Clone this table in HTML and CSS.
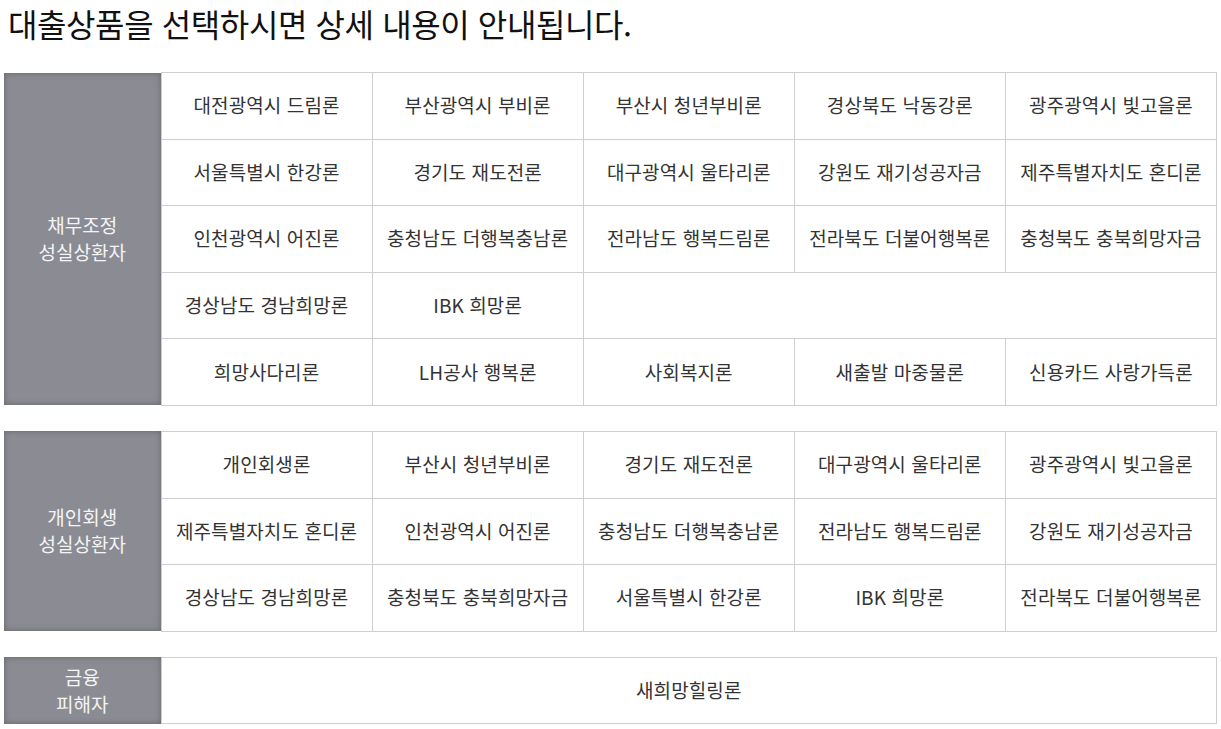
FILE: index.html
```html
<!DOCTYPE html>
<html lang="ko">
<head>
<meta charset="utf-8">
<link rel="stylesheet" href="styles.css">
</head>
<body>
<h1 class="title">대출상품을 선택하시면 상세 내용이 안내됩니다.</h1>
<table class="loan">
  <colgroup><col class="c-label"><col><col><col><col><col></colgroup>
  <tr><th rowspan="5" class="label">채무조정<br>성실상환자</th>
    <td>대전광역시 드림론</td><td>부산광역시 부비론</td><td>부산시 청년부비론</td><td>경상북도 낙동강론</td><td>광주광역시 빛고을론</td></tr>
  <tr><td>서울특별시 한강론</td><td>경기도 재도전론</td><td>대구광역시 울타리론</td><td>강원도 재기성공자금</td><td>제주특별자치도 혼디론</td></tr>
  <tr><td>인천광역시 어진론</td><td>충청남도 더행복충남론</td><td>전라남도 행복드림론</td><td>전라북도 더불어행복론</td><td>충청북도 충북희망자금</td></tr>
  <tr><td>경상남도 경남희망론</td><td>IBK 희망론</td><td colspan="3"></td></tr>
  <tr><td>희망사다리론</td><td>LH공사 행복론</td><td>사회복지론</td><td>새출발 마중물론</td><td>신용카드 사랑가득론</td></tr>
</table>
<table class="loan">
  <colgroup><col class="c-label"><col><col><col><col><col></colgroup>
  <tr><th rowspan="3" class="label">개인회생<br>성실상환자</th>
    <td>개인회생론</td><td>부산시 청년부비론</td><td>경기도 재도전론</td><td>대구광역시 울타리론</td><td>광주광역시 빛고을론</td></tr>
  <tr><td>제주특별자치도 혼디론</td><td>인천광역시 어진론</td><td>충청남도 더행복충남론</td><td>전라남도 행복드림론</td><td>강원도 재기성공자금</td></tr>
  <tr><td>경상남도 경남희망론</td><td>충청북도 충북희망자금</td><td>서울특별시 한강론</td><td>IBK 희망론</td><td>전라북도 더불어행복론</td></tr>
</table>
<table class="loan">
  <colgroup><col class="c-label"><col></colgroup>
  <tr><th class="label">금융<br>피해자</th><td>새희망힐링론</td></tr>
</table>
</body>
</html>
```
FILE: styles.css
```css
html, body {
  margin: 0;
  padding: 0;
  background: #fff;
}
body {
  padding: 0 4px;
  font-family: "Noto Sans CJK KR", "Noto Sans", sans-serif;
  color: #333;
}
.title {
  margin: 0 0 0 4px;
  padding-top: 1px;
  height: 71px;
  font-size: 32px;
  font-weight: 400;
  line-height: 44px;
  color: #111;
  letter-spacing: -0.4px;
}
.loan {
  width: 1213px;
  border-collapse: collapse;
  table-layout: fixed;
  margin-bottom: 25px;
}
.c-label {
  width: 157px;
}
.loan td {
  height: 63.6px;
  padding: 0 0 2px;
  border: 1px solid #cfcfcf;
  text-align: center;
  vertical-align: middle;
  font-size: 19px;
  letter-spacing: 0.1px;
  color: #333;
}
.loan .label {
  padding: 0 0 2px;
  background: #8b8c93;
  box-shadow: inset 0 0 6px rgba(0, 0, 0, 0.28);
  border: 0;
  color: #f4f4f6;
  font-size: 19px;
  font-weight: 400;
  line-height: 27px;
  letter-spacing: 0;
  text-align: center;
  vertical-align: middle;
}
```
